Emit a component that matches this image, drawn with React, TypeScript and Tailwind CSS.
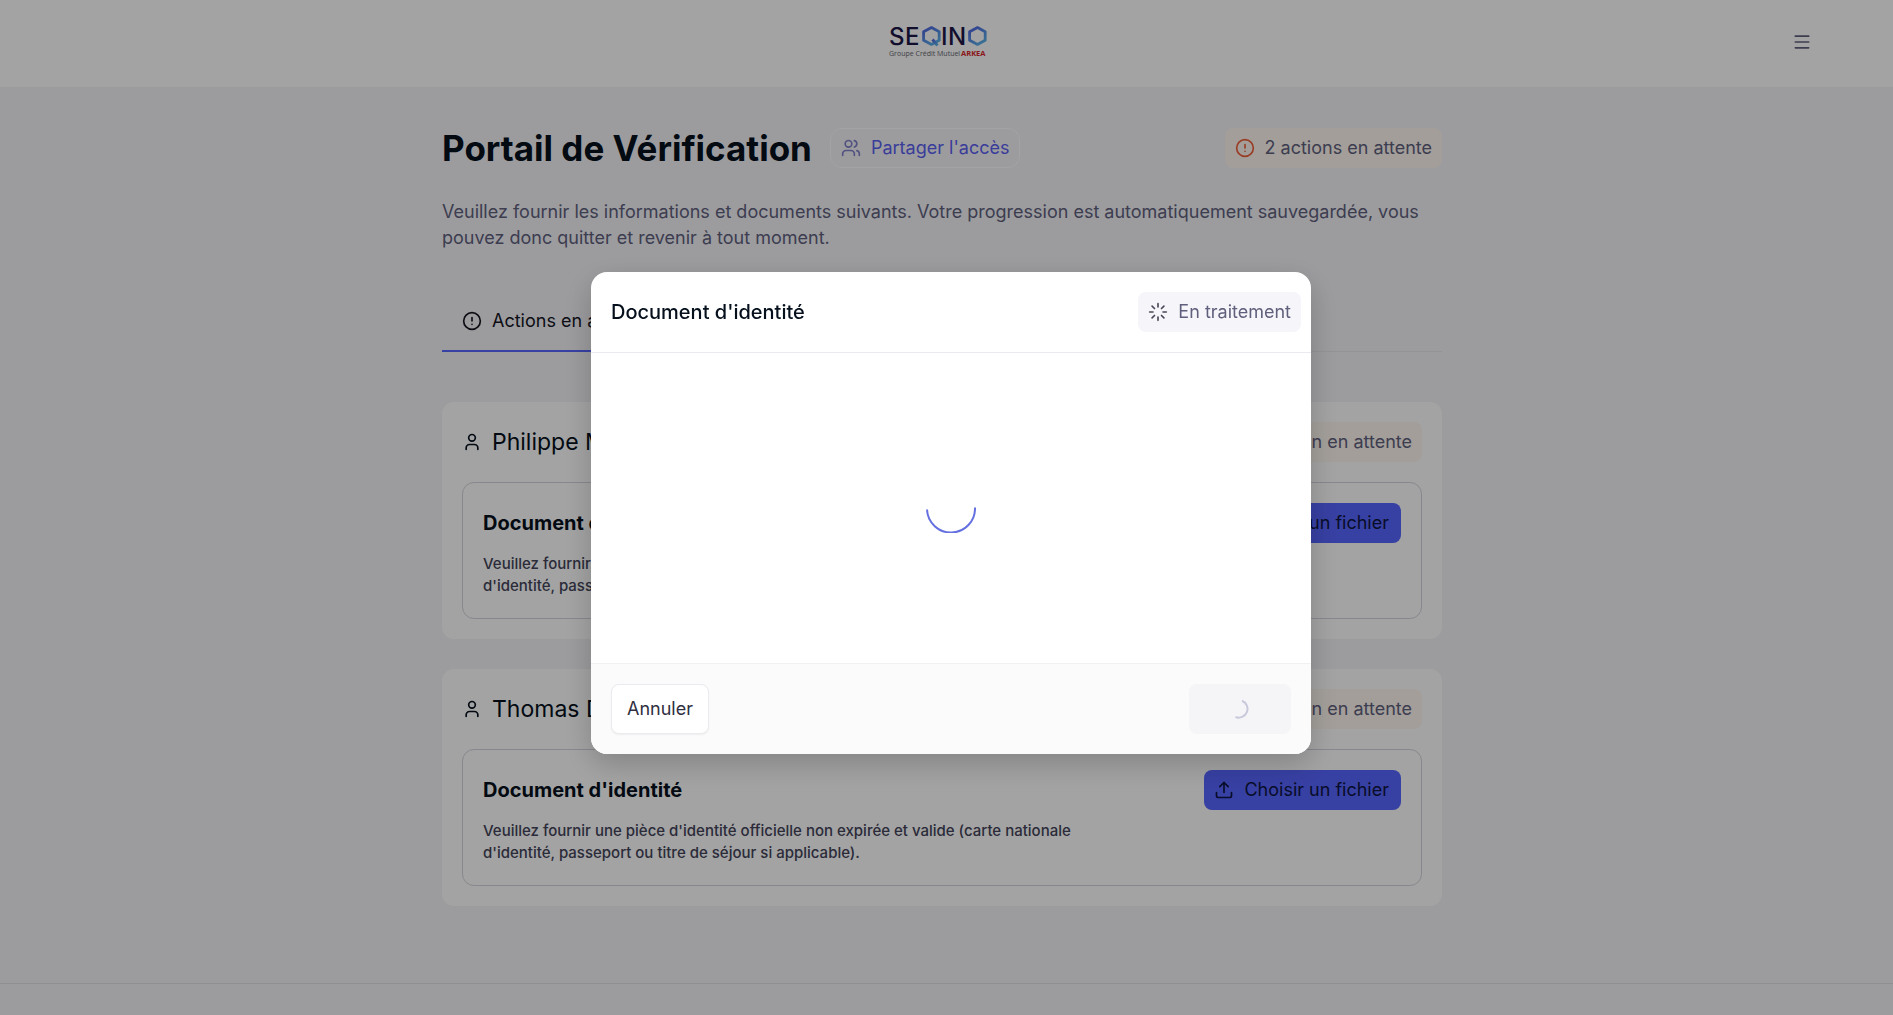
import { CircleAlert, Loader, Menu, Upload, User, Users } from "lucide-react";

const people = [{ name: "Philippe Martin" }, { name: "Thomas Durand" }];

const Logo: React.FC = () => (
  <svg width="100" height="34" viewBox="0 0 100 34" overflow="visible" role="img" aria-label="SEQINO">
    <defs>
      <linearGradient id="hex" x1="0" y1="0" x2="0.6" y2="1">
        <stop offset="0" stopColor="#4f62e0" />
        <stop offset="1" stopColor="#5aaee8" />
      </linearGradient>
    </defs>
    <g fontFamily="Inter, sans-serif" fontSize="24" fontWeight="500" fill="#1d1647">
      <text x="0" y="20">S</text>
      <text x="16" y="20">E</text>
      <text x="52" y="20">I</text>
      <text x="59" y="20">N</text>
    </g>
    <g fill="none" stroke="url(#hex)" strokeWidth="2.8" strokeLinejoin="round">
      <path d="M42.5 2.6 L50.2 6.8 V15.2 L42.5 19.4 L34.6 15.2 V6.8 Z" />
      <path d="M43.5 14.5 L48.5 20.5" />
      <path d="M88.5 2.6 L96.2 6.8 V15.2 L88.5 19.4 L80.6 15.2 V6.8 Z" />
    </g>
    <g fontFamily="'Open Sans', sans-serif" fontSize="7">
      <text x="0" y="31" fill="#66666f">Groupe Crédit Mutuel</text>
      <text x="72" y="31" fill="#d8262c" fontSize="7.5" fontWeight="700">ARKEA</text>
    </g>
  </svg>
);

const PendingBadge: React.FC<{ label: string }> = ({ label }) => (
  <span className="flex h-10 items-center gap-2.5 rounded-lg bg-[#fff8f1] px-2.5 text-[#60607d]">
    <CircleAlert size={20} className="text-[#f0603a]" />
    {label}
  </span>
);

const PersonCard: React.FC<{ name: string }> = ({ name }) => (
  <section className="rounded-xl bg-white p-5">
    <div className="flex items-center justify-between">
      <h2 className="flex items-center gap-2.5 text-[23px] leading-10 text-[#05101c]">
        <User size={20} />
        {name}
      </h2>
      <PendingBadge label="1 action en attente" />
    </div>
    <div className="mt-5 flex items-start justify-between rounded-xl border border-[#d4d4de] p-5">
      <div className="max-w-[600px]">
        <h3 className="text-xl leading-10 font-bold text-[#05101c]">Document d'identité</h3>
        <p className="mt-2.5 pb-px text-[15px] leading-[22px] font-medium text-[#44445a]">
          Veuillez fournir une pièce d'identité officielle non expirée et valide (carte nationale
          d'identité, passeport ou titre de séjour si applicable).
        </p>
      </div>
      <button className="flex h-10 items-center gap-2.5 rounded-lg bg-[#5765ff] pr-3 pl-2.5 text-[#0d1440]">
        <Upload size={20} />
        Choisir un fichier
      </button>
    </div>
  </section>
);

const DocumentDialog: React.FC = () => (
  <div className="fixed inset-0 flex items-center justify-center bg-black/36 pt-[11px] pl-[9px]">
    <div
      role="dialog"
      aria-modal="true"
      aria-labelledby="dialog-title"
      className="flex w-full max-w-[720px] flex-col overflow-hidden rounded-2xl bg-white shadow-[0_10px_30px_rgba(0,0,0,0.2)]"
    >
      <div className="flex items-center justify-between border-b border-[#ebebef] py-5 pr-2.5 pl-5">
        <h2 id="dialog-title" className="text-xl font-medium text-[#05101c]">
          Document d'identité
        </h2>
        <span className="flex h-10 items-center gap-2.5 rounded-lg bg-[#f5f5fa] px-2.5 text-[#60607d]">
          <Loader size={20} className="text-[#4a4a5a]" />
          En traitement
        </span>
      </div>
      <div className="flex h-[310px] items-center justify-center">
        <svg width="50" height="50" viewBox="0 0 50 50" fill="none" stroke="#6470e0" strokeWidth="2">
          <path d="M1 26.5 A24 24 0 0 0 49 24.5" />
        </svg>
      </div>
      <div className="flex items-center justify-between border-t border-[#f1f1f4] bg-[#fbfbfc] p-5">
        <button className="h-[50px] rounded-lg border border-[#ebebef] bg-white px-[15px] text-[#2f2f3f] shadow-xs">
          Annuler
        </button>
        <button
          disabled
          aria-label="Envoyer"
          className="flex h-[50px] w-[102px] items-center justify-center rounded-lg bg-[#f5f5f8]"
        >
          <svg width="20" height="20" viewBox="0 0 20 20" fill="none" stroke="#c9c9dc" strokeWidth="2">
            <path d="M12 1.8 A8.5 8.5 0 0 1 5.5 18" />
          </svg>
        </button>
      </div>
    </div>
  </div>
);

export default function App() {
  return (
    <div className="flex min-h-screen flex-col bg-[#f4f4f9] pr-[9px] font-['Inter',sans-serif] text-lg">
      <header className="-mr-[9px] flex h-[87px] items-center bg-white pr-[81px] pb-[3px] pl-[65px]">
        <span className="flex-1" />
        <Logo />
        <span className="flex flex-1 justify-end">
          <button aria-label="Menu" className="text-[#60607d]">
            <Menu size={20} />
          </button>
        </span>
      </header>

      <main className="mx-auto w-full max-w-[1000px] pt-[41px]">
        <div className="flex items-center justify-between">
          <div className="flex items-center gap-[18px]">
            <h1 className="text-[35px] leading-10 font-bold text-[#05101c]">
              Portail de Vérification
            </h1>
            <button className="flex h-10 items-center gap-2.5 rounded-xl border border-white px-2.5 text-[#5b5ff0]">
              <Users size={20} className="text-[#8080c8]" />
              Partager l'accès
            </button>
          </div>
          <PendingBadge label="2 actions en attente" />
        </div>
        <p className="mt-[31px] leading-[26px] text-[#60607d]">
          Veuillez fournir les informations et documents suivants. Votre progression est
          automatiquement sauvegardée, vous pouvez donc quitter et revenir à tout moment.
        </p>

        <nav className="mt-10 flex border-b border-[#e8e8ee]">
          <button className="-mb-px flex h-[61px] items-center gap-2.5 border-b-2 border-[#5765ff] px-5 text-[#15151f]">
            <CircleAlert size={20} />
            Actions en attente
          </button>
        </nav>

        <div className="mt-[50px] flex flex-col gap-[30px]">
          {people.map((person) => (
            <PersonCard key={person.name} name={person.name} />
          ))}
        </div>
      </main>

      <footer className="-mr-[9px] mt-[77px] grow border-t border-[#dedee6]" />

      <DocumentDialog />
    </div>
  );
}
